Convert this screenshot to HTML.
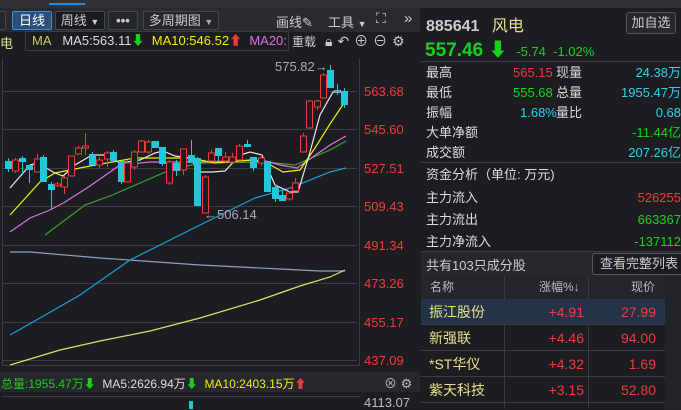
<!DOCTYPE html><html><head><meta charset="utf-8"><style>
*{margin:0;padding:0;box-sizing:border-box}
body{width:681px;height:409px;background:#1c1d21;font-family:"Liberation Sans","Noto Sans CJK SC",sans-serif;overflow:hidden;position:relative;color:#ddd}
.a{position:absolute;white-space:nowrap}
.btn{position:absolute;top:11px;height:19px;border:1px solid #454750;background:#26272c;color:#ccc;font-size:13px;line-height:17px;text-align:center;border-radius:2px}
.rp{font-size:13px;line-height:20px}
.r{color:#f23a3a}.g{color:#19d11a}.c{color:#2fd0ee}.w{color:#d8d8d8}.y{color:#e6e08a}
</style></head><body>
<div class="a" style="left:0;top:0;width:681px;height:8px;background:#303236"></div>
<div class="a" style="left:49px;top:3px;width:36px;height:2px;background:#1a8fe6"></div>
<div class="a" style="left:0;top:8px;width:420px;height:24px;background:#2a2b30"></div>
<div class="btn" style="left:-4px;width:10px"></div>
<div class="btn" style="left:12px;width:40px;background:#2a4f78;border-color:#3a8fd8;color:#fff">日线</div>
<div class="btn" style="left:55px;width:50px;background:#1a1b1f">周线 <span style="font-size:9px">▼</span></div>
<div class="btn" style="left:108px;width:30px;font-weight:bold">•••</div>
<div class="btn" style="left:143px;width:76px">多周期图 <span style="font-size:9px;color:#aaa">▼</span></div>
<div class="a" style="left:276px;top:12px;font-size:13px;color:#ccc">画线✎</div>
<div class="a" style="left:328px;top:12px;font-size:13px;color:#ccc">工具 <span style="font-size:9px">▼</span></div>
<div class="a" style="left:376px;top:10px;font-size:14px;color:#ccc">⛶</div>
<div class="a" style="left:404px;top:10px;font-size:15px;color:#ccc">»</div>
<div class="a" style="left:0;top:32px;width:420px;height:20px;background:#1c1d21"></div>
<div class="a" style="left:0;top:33px;font-size:13px;color:#e6e08a">电</div>
<div class="a" style="left:25px;top:31px;width:264px;height:20px;border:1px solid #3a3c44;font-size:13px;line-height:18px;padding-left:6px"><span style="color:#c9c96a">MA</span>&nbsp;&nbsp;&nbsp;<span style="color:#ddd">MA5:563.11</span><span class="g">⬇</span>&nbsp;&nbsp;<span style="color:#f5f000">MA10:546.52</span><span class="r">⬆</span>&nbsp;&nbsp;<span style="color:#e070e8">MA20:</span></div>
<div class="a" style="left:292px;top:33px;font-size:12px;color:#ccc">重载</div>
<div class="a" style="left:325px;top:31px;font-size:14px;color:#ccc;letter-spacing:5px">🔒︎↶⊕⊖⚙</div>
<svg class="a" style="left:0;top:52px" width="420" height="320" viewBox="0 52 420 320">
<g stroke="#3a3c42" stroke-width="1">
<line x1="2" y1="91.5" x2="357" y2="91.5"/><line x1="2" y1="129.5" x2="357" y2="129.5"/><line x1="2" y1="168.5" x2="357" y2="168.5"/><line x1="2" y1="206.5" x2="357" y2="206.5"/><line x1="2" y1="245.5" x2="357" y2="245.5"/><line x1="2" y1="283.5" x2="357" y2="283.5"/><line x1="2" y1="322.5" x2="357" y2="322.5"/><line x1="2" y1="360.5" x2="357" y2="360.5"/>
<line x1="2.5" y1="58" x2="2.5" y2="366"/><line x1="359.5" y1="58" x2="359.5" y2="366"/><line x1="2" y1="365.5" x2="359" y2="365.5"/>
</g>
<line x1="420.5" y1="32" x2="420.5" y2="409" stroke="#3a3c42"/>
<g fill="none" stroke-width="1.2">
<polyline stroke="#8fa0c0" points="10,252 30,252 100,258 200,265 280,269 320,271 345,271"/>
<polyline stroke="#e0e070" points="10,365 60,350 100,341 150,331 200,318 260,300 300,286 330,277 345,270"/>
<polyline stroke="#1aa0e0" points="10,335 40,318 80,295 130,260 170,240 200,225 255,198 290,188 330,172 346,168"/>
<polyline stroke="#3aa030" points="45,235 85,205 110,196 170,170 200,163 265,162 295,165 330,150 346,141"/>
<polyline stroke="#e070e8" points="10,232 30,218 50,210 65,202 90,186 120,165 150,162 200,162 262,160 280,165 297,168 330,145 346,136"/>
<polyline stroke="#f0f000" points="10,215 40,182 55,173 90,166 135,158 190,158 215,163 250,160 265,162 283,172 300,170 315,148 330,124 346,100"/>
<polyline stroke="#e8e8e8" points="10,188 30,165 37,163 55,173 63,176 75,165 92,155 105,155 120,163 140,160 155,153 163,151 175,156 190,158 200,172 212,172 225,171 240,155 250,152 262,155 275,185 290,192 298,192 310,152 320,115 333,92 345,92"/>
</g>
<g id="k"></g>
<text x="275" y="71" fill="#aab" font-size="13" font-family="Liberation Sans">575.82→</text>
<text x="204" y="219" fill="#aab" font-size="13" font-family="Liberation Sans">←506.14</text>
<g fill="#f23a3a" font-size="13" font-family="Liberation Sans">
<text x="364" y="96">563.68</text><text x="364" y="134">545.60</text><text x="364" y="173">527.51</text><text x="364" y="211">509.43</text><text x="364" y="250">491.34</text><text x="364" y="288">473.26</text><text x="364" y="327">455.17</text><text x="364" y="365">437.09</text>
</g>
</svg>
<div class="a" style="left:0;top:372px;width:420px;height:20px;background:#27282d"></div>
<div class="a" style="left:1px;top:375px;font-size:12px"><span class="g">总量:1955.47万⬇</span>&nbsp;&nbsp;<span style="color:#ddd">MA5:2626.94万</span><span class="g">⬇</span>&nbsp;&nbsp;<span style="color:#f0f000">MA10:2403.15万</span><span class="r">⬆</span></div>
<div class="a" style="left:384px;top:373px;font-size:13px;color:#bbb">⊗ ⚙</div>
<div class="a" style="left:2px;top:396px;width:358px;height:1px;background:#3a3c42"></div>
<div class="a" style="left:189px;top:401px;width:4px;height:8px;background:#22c8d8"></div>
<div class="a" style="left:364px;top:395px;font-size:13px;color:#bbc">4113.07</div>
<!-- right panel -->
<div class="a" style="left:421px;top:8px;width:260px;height:401px;background:#1c1d21"></div>
<div class="a" style="left:426px;top:12px;font-size:16px;font-weight:bold;color:#ccc">885641 <span style="color:#e6e08a;font-weight:normal;margin-left:8px">风电</span></div>
<div class="a" style="left:626px;top:12px;width:50px;height:22px;border:1px solid #555;border-radius:3px;background:#26272c;font-size:13px;line-height:20px;text-align:center;color:#ccc">加自选</div>
<div class="a g" style="left:425px;top:35px;font-size:19px;font-weight:bold">557.46 ⬇ <span style="font-size:13px;font-weight:normal">&nbsp;-5.74&nbsp; -1.02%</span></div>
<div class="a" style="left:421px;top:61px;width:260px;height:1px;background:#3a3c42"></div>
<div class="a rp" style="left:426px;top:63px;width:255px">
<div>最高<span class="a r" style="left:87px">565.15</span><span class="a w" style="left:130px">现量</span><span class="a c" style="right:0">24.38万</span></div>
<div style="position:relative">最低<span class="a g" style="left:87px">555.68</span><span class="a w" style="left:130px">总量</span><span class="a c" style="right:0">1955.47万</span></div>
<div style="position:relative">振幅<span class="a c" style="left:94px">1.68%</span><span class="a w" style="left:130px">量比</span><span class="a c" style="right:0">0.68</span></div>
<div style="position:relative">大单净额<span class="a g" style="right:0">-11.44亿</span></div>
<div style="position:relative">成交额<span class="a c" style="right:0">207.26亿</span></div>
</div>
<div class="a" style="left:421px;top:162px;width:260px;height:1px;background:#3a3c42"></div>
<div class="a rp" style="left:426px;top:165px;width:255px">
<div>资金分析（单位: 万元)</div>
<div style="position:relative;margin-top:3px">主力流入<span class="a r" style="right:0">526255</span></div>
<div style="position:relative;margin-top:2px">主力流出<span class="a g" style="right:0">663367</span></div>
<div style="position:relative;margin-top:2px">主力净流入<span class="a g" style="right:0">-137112</span></div>
</div>
<div class="a" style="left:421px;top:251px;width:260px;height:25px;background:#27282d;border-top:1px solid #3a3c42"></div>
<div class="a" style="left:426px;top:255px;font-size:13px;color:#ccc">共有103只成分股</div>
<div class="a" style="left:592px;top:253px;width:92px;height:22px;border:1px solid #555;border-radius:3px;background:#1c1d21;font-size:13px;line-height:20px;padding-left:7px;color:#ccc">查看完整列表</div>
<div class="a" style="left:421px;top:276px;width:245px;height:23px;background:#25262b;font-size:12px;color:#bbb;line-height:23px">
<span class="a" style="left:9px">名称</span><span class="a" style="left:118px">涨幅%↓</span><span class="a" style="left:210px">现价</span></div>
<div class="a" style="left:504px;top:276px;width:1px;height:133px;background:#3a3c42"></div>
<div class="a" style="left:588px;top:276px;width:1px;height:133px;background:#3a3c42"></div>
<div class="a" style="left:665px;top:276px;width:16px;height:133px;background:#222328"></div>
<div class="a" style="left:421px;top:299px;width:244px;height:26px;background:#253349"></div>
<div class="a" style="left:421px;top:324px;width:244px;height:1px;background:#3a3c42"></div>
<div class="a" style="left:421px;top:350px;width:244px;height:1px;background:#3a3c42"></div>
<div class="a" style="left:421px;top:376px;width:244px;height:1px;background:#3a3c42"></div>
<div class="a" style="left:421px;top:402px;width:244px;height:1px;background:#3a3c42"></div>
<div class="a" style="left:429px;top:299px;font-size:14px;line-height:26px;color:#e6e08a">振江股份<br>新强联<br>*ST华仪<br>紫天科技</div>
<div class="a r" style="left:504px;width:80px;top:299px;font-size:14px;line-height:26px;text-align:right">+4.91<br>+4.46<br>+4.32<br>+3.15</div>
<div class="a r" style="left:588px;width:68px;top:299px;font-size:14px;line-height:26px;text-align:right">27.99<br>94.00<br>1.69<br>52.80</div>
<script>
var d=[[8,161,169,0,158,172],[15,160,171,1,158,173],[22,158,162,0,156,175],[29,165,170,0,165,183],[37,159,172,1,154,172],[43,157,182,0,155,182],[51,184,190,0,182,209],[57,184,186,1,182,187],[64,178,187,1,176,194],[71,156,176,1,156,176],[78,148,154,1,146,155],[85,146,148,1,133,155],[92,154,165,0,152,165],[99,160,165,1,157,168],[107,153,159,1,151,167],[113,152,161,0,150,163],[121,161,182,0,161,184],[127,163,182,1,160,182],[134,152,167,1,150,170],[141,141,152,1,140,152],[148,142,152,1,140,154],[155,141,148,0,141,148],[162,147,164,0,147,166],[169,162,183,1,160,185],[176,163,171,0,160,176],[183,149,170,1,149,175],[191,155,163,0,140,163],[197,158,206,0,157,206],[205,177,213,1,175,213],[211,153,161,1,150,161],[218,148,156,0,148,162],[225,157,161,1,152,163],[232,157,162,1,153,163],[239,146,160,1,144,160],[247,144,147,0,140,147],[253,157,168,0,157,171],[261,158,163,1,155,166],[267,161,192,0,161,192],[275,187,199,0,185,202],[282,195,201,0,190,201],[289,193,199,1,191,201],[295,183,191,1,178,191],[303,136,152,1,133,152],[309,101,128,1,101,128],[317,101,107,1,100,110],[323,75,98,1,73,98],[330,70,88,0,65,88],[337,90,92,0,84,95],[344,91,105,0,88,108]];
var s='';d.forEach(function(c){var x=c[0],col=c[3]?'#f23a3a':'#22c8d8';s+='<line x1="'+(x+.5)+'" x2="'+(x+.5)+'" y1="'+c[4]+'" y2="'+c[5]+'" stroke="'+col+'"/>';
if(c[3]){s+='<rect x="'+(x-2.5)+'" y="'+c[1]+'" width="6" height="'+(c[2]-c[1])+'" fill="#1c1d21" stroke="'+col+'"/>'}else{s+='<rect x="'+(x-3)+'" y="'+c[1]+'" width="7" height="'+Math.max(1,c[2]-c[1])+'" fill="'+col+'"/>'}});
document.getElementById('k').innerHTML=s;
</script>
</body></html>
